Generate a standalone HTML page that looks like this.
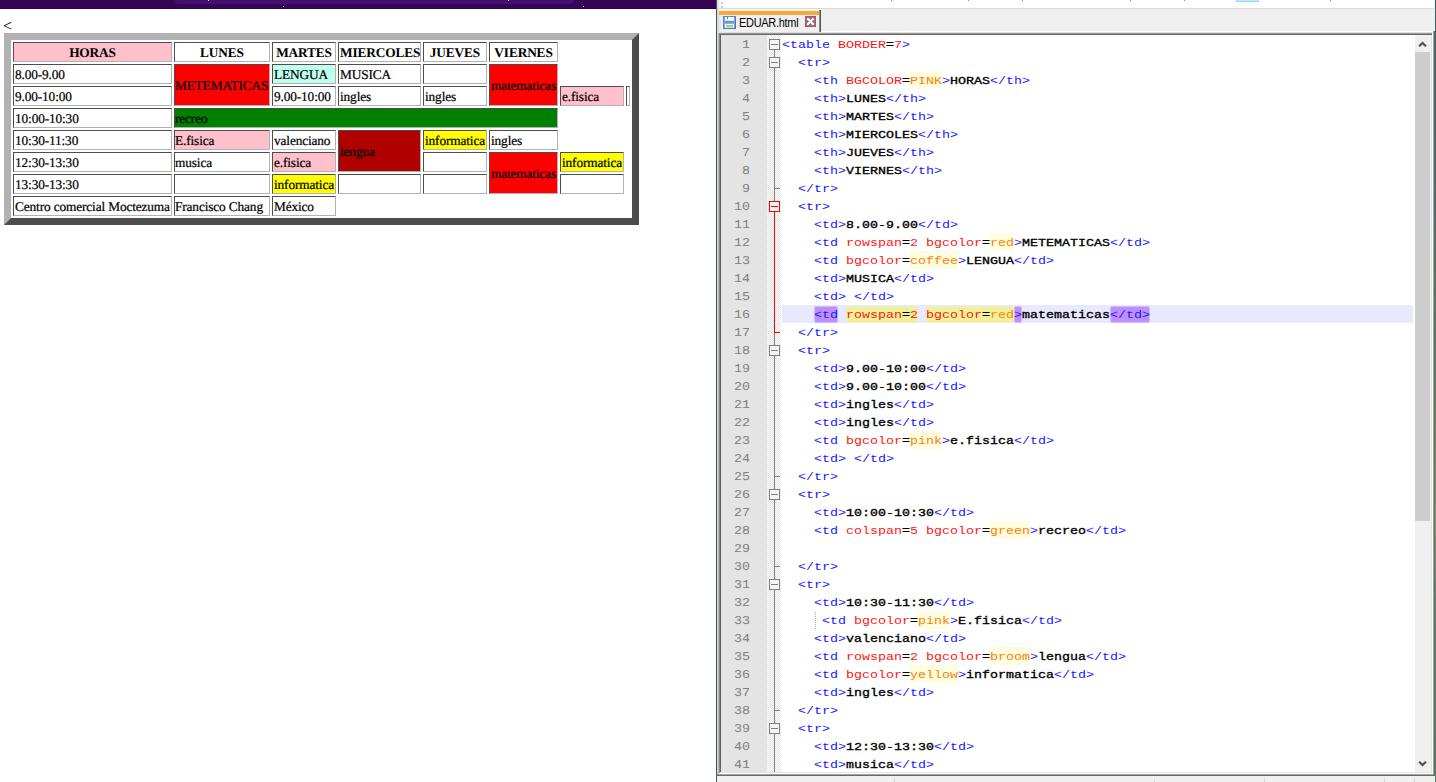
<!DOCTYPE html>
<html><head><meta charset="utf-8"><title>EDUAR</title>
<style>
html,body{margin:0;padding:0}
body{width:1436px;height:782px;overflow:hidden;background:#fff;position:relative;font-family:"Liberation Serif",serif}
div,span,svg{position:absolute;box-sizing:content-box}
/* browser pane */
#bar{left:0;top:0;width:716px;height:9px;background:linear-gradient(#380556 0,#380556 8px,#25004d 8px)}
#pill{left:175px;top:0;width:399px;height:4px;background:#450f76;border-radius:0 0 5px 5px}
.dot{width:1px;height:1px;background:#f3dfe3}
#lt{left:3px;top:18px;font-size:16px;line-height:18px;color:#000;text-rendering:geometricPrecision}
#tb{left:4px;top:33px;width:621px;height:178px;border:7px solid;border-color:#b2b2b2 #4d4d4d #4d4d4d #b2b2b2;background:#fff}
.c{border:1px solid;border-color:#4d4d4d #b2b2b2 #b2b2b2 #4d4d4d;font-size:13.3333px;letter-spacing:-0.135px;line-height:16px;color:#000;white-space:nowrap;overflow:visible;text-rendering:geometricPrecision}
.c span{left:1px;right:1px;height:16px;-webkit-text-stroke:0.22px #000}
.th span{text-align:center;font-weight:bold;-webkit-text-stroke:0}
/* notepad++ pane */
#npp{left:716px;top:0;width:720px;height:782px;background:#f0f0f0}
#nl{left:0;top:0;width:1px;height:782px;background:#3d5757}
#tbar{left:1px;top:0;width:717px;height:8px;background:linear-gradient(90deg,#dadada 0,#f4f4f4 3px,#fdfdfd 6px,#fff 12px)}
.grip{left:5px;width:2px;height:2px;background:#bcbcbc;border-radius:1px}
#tline{left:1px;top:8px;width:717px;height:1px;background:#dadada}
.tick{top:0;width:1px;height:1px;background:#8a8a8a}
#tabhl{left:3px;top:9px;width:102px;height:2px;background:linear-gradient(#fafafa 50%,#e9eff7 50%)}
#orange{left:3px;top:11px;width:100px;height:4px;background:#faa83a}
#tabr{left:103px;top:10px;width:2px;height:22px;background:linear-gradient(90deg,#8c8c8c 50%,#555 50%)}
#tabtxt{left:23px;top:15px;font-family:"Liberation Sans",sans-serif;font-size:11px;line-height:16px;letter-spacing:-0.3px;color:#000;white-space:nowrap;transform:scaleY(1.12);transform-origin:0 12px}
#edtop0{left:105px;top:31px;width:612px;height:1px;background:#fff}
#edtop1{left:3px;top:32px;width:714px;height:1px;background:#dedede}
#edtop2{left:3px;top:33px;width:714px;height:1px;background:#969696}
#edtop3{left:4px;top:34px;width:713px;height:1px;background:#696969}
#edl1{left:3px;top:33px;width:1px;height:740px;background:#8a8a8a}
#edl2{left:4px;top:34px;width:1px;height:738px;background:#606060}
#ed{left:5px;top:35px;width:710px;height:738px;background:#fff;overflow:hidden}
#edb0{left:5px;top:772px;width:710px;height:1px;background:#e3e3e3}
#edb1{left:3px;top:773px;width:713px;height:1px;background:#fff}
#edb2{left:1px;top:774px;width:718px;height:1px;background:#a0a0a0}
#edb3{left:1px;top:775px;width:718px;height:1px;background:#696969}
#edr0{left:715px;top:35px;width:1px;height:738px;background:#e3e3e3}
#edr1{left:716px;top:33px;width:1px;height:741px;background:#fff}
#edr2{left:717px;top:31px;width:1px;height:744px;background:#a0a0a0}
#desk{left:719px;top:0;width:1px;height:782px;background:linear-gradient(#2a6470 0%,#2b6b6a 20%,#5c8f55 50%,#7da05a 67%,#5a9070 77%,#3f8a68 100%)}
#lstrip1{left:1px;top:33px;width:1px;height:741px;background:#d4d4d4}
#lstrip2{left:2px;top:33px;width:1px;height:741px;background:#b8b8b8}
#desk2{left:718px;top:0;width:1px;height:782px;background:linear-gradient(#2a6470 0%,#2b6b6a 25%,#5c8f55 55%,#7da05a 70%,#3f8060 100%);opacity:0.45}
#edr3{left:718px;top:31px;width:1px;height:745px;background:#696969}
#mg{left:5px;top:35px;width:46px;height:738px;background:#e4e4e4}
#fm{left:51px;top:35px;width:14px;height:738px;background-color:#fff;
 background-image:linear-gradient(45deg,#e4e4e4 25%,transparent 25%,transparent 75%,#e4e4e4 75%),linear-gradient(45deg,#e4e4e4 25%,transparent 25%,transparent 75%,#e4e4e4 75%);
 background-size:2px 2px;background-position:0 0,1px 1px}
.foldsvg{left:51px;top:35px}
.ln{left:66px;width:633px;height:18px}
.num{left:5px;width:29px;height:18px}
.tx{left:0;top:1px;height:18px;font-family:"Liberation Mono",monospace;font-size:13.3333px;line-height:18px;white-space:pre;color:#000;transform:scaleY(0.88);transform-origin:0 12px}
.tx span{position:static}
.num .tx{left:auto;right:0;top:2px;color:#808080;text-rendering:geometricPrecision;transform:scaleY(0.90)}
.cur{left:66px;width:631px;height:18px;background:#e8e8ff}
.t{color:#1818ff}
.a{color:#ff1414}
.n{color:#ff1414}
.e{color:#000;-webkit-text-stroke:0.38px #000}
.x{color:#000;-webkit-text-stroke:0.38px #000}
.v{color:#ff8000}
.vbg{height:18px;background:#fefde0}
.hy{height:17px;background:#f1f19b;border:1px solid #ededcc;border-radius:2px;box-sizing:border-box}
.hp{height:17px;background:#bf8fff;border:1px solid #d3baff;border-radius:2px;box-sizing:border-box}
#guide{left:99px;top:612px;width:1px;height:17px;background-image:linear-gradient(#b0b0b0 50%,transparent 50%);background-size:1px 2px}
/* scrollbar */
#sb{left:699px;top:35px;width:17px;height:738px;background:#f0f0f0}
#thumb{left:699px;top:52px;width:15px;height:469px;background:#cdcdcd}
/* status */
.sdiv{top:778px;width:1px;height:4px;background:#d7d7d7}
</style></head>
<body>
<div id="bar"></div><div id="pill"></div>
<div class="dot" style="left:208px;top:0"></div><div class="dot" style="left:283px;top:6px"></div>
<div class="dot" style="left:508px;top:0"></div><div class="dot" style="left:583px;top:6px"></div>
<div id="lt">&lt;</div>
<div id="tb"></div>
<div class="c th" style="left:13px;top:42px;width:157px;height:18px;background:#ffc0cb;"><span style="top:2px">HORAS</span></div>
<div class="c th" style="left:174px;top:42px;width:94px;height:18px;"><span style="top:2px">LUNES</span></div>
<div class="c th" style="left:272px;top:42px;width:62px;height:18px;"><span style="top:2px">MARTES</span></div>
<div class="c th" style="left:338px;top:42px;width:81px;height:18px;"><span style="top:2px">MIERCOLES</span></div>
<div class="c th" style="left:423px;top:42px;width:62px;height:18px;"><span style="top:2px">JUEVES</span></div>
<div class="c th" style="left:489px;top:42px;width:67px;height:18px;"><span style="top:2px">VIERNES</span></div>
<div class="c" style="left:13px;top:64px;width:157px;height:18px;"><span style="top:2px">8.00-9.00</span></div>
<div class="c" style="left:174px;top:64px;width:94px;height:40px;background:#ff0000;"><span style="top:13px;left:0">METEMATICAS</span></div>
<div class="c" style="left:272px;top:64px;width:62px;height:18px;background:#c0ffee;"><span style="top:2px">LENGUA</span></div>
<div class="c" style="left:338px;top:64px;width:81px;height:18px;"><span style="top:2px">MUSICA</span></div>
<div class="c" style="left:423px;top:64px;width:62px;height:18px;"></div>
<div class="c" style="left:489px;top:64px;width:67px;height:40px;background:#ff0000;"><span style="top:13px">matematicas</span></div>
<div class="c" style="left:13px;top:86px;width:157px;height:18px;"><span style="top:2px">9.00-10:00</span></div>
<div class="c" style="left:272px;top:86px;width:62px;height:18px;"><span style="top:2px">9.00-10:00</span></div>
<div class="c" style="left:338px;top:86px;width:81px;height:18px;"><span style="top:2px">ingles</span></div>
<div class="c" style="left:423px;top:86px;width:62px;height:18px;"><span style="top:2px">ingles</span></div>
<div class="c" style="left:560px;top:86px;width:62px;height:18px;background:#ffc0cb;"><span style="top:2px">e.fisica</span></div>
<div class="c" style="left:626px;top:86px;width:2px;height:18px;"></div>
<div class="c" style="left:13px;top:108px;width:157px;height:18px;"><span style="top:2px">10:00-10:30</span></div>
<div class="c" style="left:174px;top:108px;width:382px;height:18px;background:#008000;"><span style="top:2px;left:0">recreo</span></div>
<div class="c" style="left:13px;top:130px;width:157px;height:18px;"><span style="top:2px">10:30-11:30</span></div>
<div class="c" style="left:174px;top:130px;width:94px;height:18px;background:#ffc0cb;"><span style="top:2px;left:0">E.fisica</span></div>
<div class="c" style="left:272px;top:130px;width:62px;height:18px;"><span style="top:2px">valenciano</span></div>
<div class="c" style="left:338px;top:130px;width:81px;height:40px;background:#b00000;"><span style="top:13px">lengua</span></div>
<div class="c" style="left:423px;top:130px;width:62px;height:18px;background:#ffff00;"><span style="top:2px">informatica</span></div>
<div class="c" style="left:489px;top:130px;width:67px;height:18px;"><span style="top:2px">ingles</span></div>
<div class="c" style="left:13px;top:152px;width:157px;height:18px;"><span style="top:2px">12:30-13:30</span></div>
<div class="c" style="left:174px;top:152px;width:94px;height:18px;"><span style="top:2px;left:0">musica</span></div>
<div class="c" style="left:272px;top:152px;width:62px;height:18px;background:#ffc0cb;"><span style="top:2px">e.fisica</span></div>
<div class="c" style="left:423px;top:152px;width:62px;height:18px;"></div>
<div class="c" style="left:489px;top:152px;width:67px;height:40px;background:#ff0000;"><span style="top:13px">matematicas</span></div>
<div class="c" style="left:560px;top:152px;width:62px;height:18px;background:#ffff00;"><span style="top:2px">informatica</span></div>
<div class="c" style="left:13px;top:174px;width:157px;height:18px;"><span style="top:2px">13:30-13:30</span></div>
<div class="c" style="left:174px;top:174px;width:94px;height:18px;"></div>
<div class="c" style="left:272px;top:174px;width:62px;height:18px;background:#ffff00;"><span style="top:2px">informatica</span></div>
<div class="c" style="left:338px;top:174px;width:81px;height:18px;"></div>
<div class="c" style="left:423px;top:174px;width:62px;height:18px;"></div>
<div class="c" style="left:560px;top:174px;width:62px;height:18px;"></div>
<div class="c" style="left:13px;top:196px;width:157px;height:18px;"><span style="top:2px">Centro comercial Moctezuma</span></div>
<div class="c" style="left:174px;top:196px;width:94px;height:18px;"><span style="top:2px;left:0">Francisco Chang</span></div>
<div class="c" style="left:272px;top:196px;width:62px;height:18px;"><span style="top:2px">México</span></div>
<div id="npp">
<div id="tbar"></div><div class="grip" style="top:2px"></div><div class="grip" style="top:6px"></div><div id="tline"></div><div class="tick" style="left:175px"></div><div class="tick" style="left:252px"></div><div class="tick" style="left:306px"></div><div class="tick" style="left:414px"></div><div class="tick" style="left:468px"></div><div class="tick" style="left:614px"></div>
<div style="left:520px;top:0;width:21px;height:1px;background:#cce8ff;border:1px solid #99d1ff;border-top:0"></div>
<div style="left:1px;top:9px;width:5px;height:24px;background:linear-gradient(90deg,#d9d9d9,#f0f0f0)"></div><div id="tabhl"></div><div id="orange"></div><div id="tabr"></div>
<svg style="left:7px;top:16px" width="13" height="13" viewBox="0 0 13 13" shape-rendering="crispEdges">
<rect x="0" y="0" width="13" height="13" fill="#5d8ad0"/>
<rect x="1" y="1" width="11" height="11" fill="#7ca5e4"/>
<rect x="12" y="1" width="1" height="12" fill="#4a78bf"/>
<rect x="0" y="12" width="13" height="1" fill="#4a78bf"/>
<rect x="2" y="1" width="9" height="3" fill="#fff"/>
<rect x="2" y="4" width="9" height="1" fill="#d9e6f8"/>
<rect x="4" y="1" width="1" height="2" fill="#5b82c8"/>
<rect x="4" y="3" width="1" height="1" fill="#b7cdee"/>
<rect x="2" y="5" width="9" height="1" fill="#628ed6"/>
<rect x="2" y="6" width="9" height="1" fill="#6f9ce2"/>
<rect x="2" y="7" width="9" height="1" fill="#86afee"/>
<rect x="2" y="8" width="9" height="4" fill="#f4f8fd"/>
<rect x="3" y="9" width="7" height="1" fill="#9bcf7e"/>
<rect x="3" y="10" width="7" height="1" fill="#afd996"/>
<rect x="3" y="11" width="7" height="1" fill="#c6e5b3"/>
</svg>
<div id="tabtxt">EDUAR.html</div>
<svg style="left:89px;top:16px" width="11" height="11" viewBox="0 0 11 11" shape-rendering="crispEdges">
<rect x="0" y="0" width="11" height="11" fill="#a4586f"/>
<rect x="1" y="1" width="9" height="9" fill="#b06a82"/>
<g fill="#fff">
<rect x="2" y="2" width="2" height="1"/><rect x="7" y="2" width="2" height="1"/>
<rect x="2" y="3" width="3" height="1"/><rect x="6" y="3" width="3" height="1"/>
<rect x="3" y="4" width="5" height="1"/>
<rect x="4" y="5" width="3" height="1"/>
<rect x="3" y="6" width="5" height="1"/>
<rect x="2" y="7" width="3" height="1"/><rect x="6" y="7" width="3" height="1"/>
<rect x="2" y="8" width="2" height="1"/><rect x="7" y="8" width="2" height="1"/>
</g>
</svg>
<div id="edtop0"></div><div id="edtop1"></div><div id="edtop2"></div><div id="edtop3"></div>
<div id="lstrip1"></div><div id="lstrip2"></div><div id="edl1"></div><div id="edl2"></div>
<div id="ed"></div>
<div id="mg"></div><div id="fm"></div>
<svg class="foldsvg" width="14" height="738" viewBox="0 0 14 738" shape-rendering="crispEdges"><rect x="2.5" y="4.5" width="10" height="10" fill="#f4f4f4" stroke="#808080" stroke-width="1"/><rect x="4" y="9" width="7" height="1" fill="#808080"/><rect x="7" y="15" width="1" height="3" fill="#808080"/><rect x="7" y="18" width="1" height="4" fill="#808080"/><rect x="2.5" y="22.5" width="10" height="10" fill="#f4f4f4" stroke="#808080" stroke-width="1"/><rect x="4" y="27" width="7" height="1" fill="#808080"/><rect x="7" y="33" width="1" height="3" fill="#808080"/><rect x="7" y="36" width="1" height="18" fill="#808080"/><rect x="7" y="54" width="1" height="18" fill="#808080"/><rect x="7" y="72" width="1" height="18" fill="#808080"/><rect x="7" y="90" width="1" height="18" fill="#808080"/><rect x="7" y="108" width="1" height="18" fill="#808080"/><rect x="7" y="126" width="1" height="18" fill="#808080"/><rect x="7" y="144" width="1" height="10" fill="#808080"/><rect x="7" y="154" width="1" height="8" fill="#808080"/><rect x="8" y="153" width="5" height="1" fill="#808080"/><rect x="7" y="162" width="1" height="4" fill="#808080"/><rect x="2.5" y="166.5" width="10" height="10" fill="#f4f4f4" stroke="#ff0000" stroke-width="1"/><rect x="4" y="171" width="7" height="1" fill="#ff0000"/><rect x="7" y="177" width="1" height="3" fill="#ff0000"/><rect x="7" y="180" width="1" height="18" fill="#ff0000"/><rect x="7" y="198" width="1" height="18" fill="#ff0000"/><rect x="7" y="216" width="1" height="18" fill="#ff0000"/><rect x="7" y="234" width="1" height="18" fill="#ff0000"/><rect x="7" y="252" width="1" height="18" fill="#ff0000"/><rect x="7" y="270" width="1" height="18" fill="#ff0000"/><rect x="7" y="288" width="1" height="10" fill="#ff0000"/><rect x="7" y="298" width="1" height="8" fill="#808080"/><rect x="8" y="297" width="5" height="1" fill="#ff0000"/><rect x="7" y="306" width="1" height="4" fill="#808080"/><rect x="2.5" y="310.5" width="10" height="10" fill="#f4f4f4" stroke="#808080" stroke-width="1"/><rect x="4" y="315" width="7" height="1" fill="#808080"/><rect x="7" y="321" width="1" height="3" fill="#808080"/><rect x="7" y="324" width="1" height="18" fill="#808080"/><rect x="7" y="342" width="1" height="18" fill="#808080"/><rect x="7" y="360" width="1" height="18" fill="#808080"/><rect x="7" y="378" width="1" height="18" fill="#808080"/><rect x="7" y="396" width="1" height="18" fill="#808080"/><rect x="7" y="414" width="1" height="18" fill="#808080"/><rect x="7" y="432" width="1" height="10" fill="#808080"/><rect x="7" y="442" width="1" height="8" fill="#808080"/><rect x="8" y="441" width="5" height="1" fill="#808080"/><rect x="7" y="450" width="1" height="4" fill="#808080"/><rect x="2.5" y="454.5" width="10" height="10" fill="#f4f4f4" stroke="#808080" stroke-width="1"/><rect x="4" y="459" width="7" height="1" fill="#808080"/><rect x="7" y="465" width="1" height="3" fill="#808080"/><rect x="7" y="468" width="1" height="18" fill="#808080"/><rect x="7" y="486" width="1" height="18" fill="#808080"/><rect x="7" y="504" width="1" height="18" fill="#808080"/><rect x="7" y="522" width="1" height="10" fill="#808080"/><rect x="7" y="532" width="1" height="8" fill="#808080"/><rect x="8" y="531" width="5" height="1" fill="#808080"/><rect x="7" y="540" width="1" height="4" fill="#808080"/><rect x="2.5" y="544.5" width="10" height="10" fill="#f4f4f4" stroke="#808080" stroke-width="1"/><rect x="4" y="549" width="7" height="1" fill="#808080"/><rect x="7" y="555" width="1" height="3" fill="#808080"/><rect x="7" y="558" width="1" height="18" fill="#808080"/><rect x="7" y="576" width="1" height="18" fill="#808080"/><rect x="7" y="594" width="1" height="18" fill="#808080"/><rect x="7" y="612" width="1" height="18" fill="#808080"/><rect x="7" y="630" width="1" height="18" fill="#808080"/><rect x="7" y="648" width="1" height="18" fill="#808080"/><rect x="7" y="666" width="1" height="10" fill="#808080"/><rect x="7" y="676" width="1" height="8" fill="#808080"/><rect x="8" y="675" width="5" height="1" fill="#808080"/><rect x="7" y="684" width="1" height="4" fill="#808080"/><rect x="2.5" y="688.5" width="10" height="10" fill="#f4f4f4" stroke="#808080" stroke-width="1"/><rect x="4" y="693" width="7" height="1" fill="#808080"/><rect x="7" y="699" width="1" height="3" fill="#808080"/><rect x="7" y="702" width="1" height="18" fill="#808080"/><rect x="7" y="720" width="1" height="18" fill="#808080"/></svg>
<div class="cur" style="top:305px"></div>
<div class="vbg" style="left:194px;top:71px;width:32px"></div>
<div class="vbg" style="left:274px;top:233px;width:24px"></div>
<div class="vbg" style="left:194px;top:251px;width:48px"></div>
<div class="hp" style="left:98px;top:306px;width:24px"></div>
<div class="hy" style="left:130px;top:306px;width:72px"></div>
<div class="hy" style="left:210px;top:306px;width:88px"></div>
<div class="hp" style="left:298px;top:306px;width:8px"></div>
<div class="hp" style="left:394px;top:306px;width:40px"></div>
<div class="vbg" style="left:194px;top:431px;width:32px"></div>
<div class="vbg" style="left:274px;top:521px;width:40px"></div>
<div class="vbg" style="left:202px;top:611px;width:32px"></div>
<div class="vbg" style="left:274px;top:647px;width:40px"></div>
<div class="vbg" style="left:194px;top:665px;width:48px"></div>
<div class="ln" style="top:35px"><span class="tx"><span class="t">&lt;table</span> <span class="a">BORDER</span><span class="e">=</span><span class="n">7</span><span class="t">&gt;</span></span></div>
<div class="num" style="top:35px"><span class="tx">1</span></div>
<div class="ln" style="top:53px"><span class="tx">  <span class="t">&lt;tr&gt;</span></span></div>
<div class="num" style="top:53px"><span class="tx">2</span></div>
<div class="ln" style="top:71px"><span class="tx">    <span class="t">&lt;th</span> <span class="a">BGCOLOR</span><span class="e">=</span><span class="v">PINK</span><span class="t">&gt;</span><span class="x">HORAS</span><span class="t">&lt;/th&gt;</span></span></div>
<div class="num" style="top:71px"><span class="tx">3</span></div>
<div class="ln" style="top:89px"><span class="tx">    <span class="t">&lt;th&gt;</span><span class="x">LUNES</span><span class="t">&lt;/th&gt;</span></span></div>
<div class="num" style="top:89px"><span class="tx">4</span></div>
<div class="ln" style="top:107px"><span class="tx">    <span class="t">&lt;th&gt;</span><span class="x">MARTES</span><span class="t">&lt;/th&gt;</span></span></div>
<div class="num" style="top:107px"><span class="tx">5</span></div>
<div class="ln" style="top:125px"><span class="tx">    <span class="t">&lt;th&gt;</span><span class="x">MIERCOLES</span><span class="t">&lt;/th&gt;</span></span></div>
<div class="num" style="top:125px"><span class="tx">6</span></div>
<div class="ln" style="top:143px"><span class="tx">    <span class="t">&lt;th&gt;</span><span class="x">JUEVES</span><span class="t">&lt;/th&gt;</span></span></div>
<div class="num" style="top:143px"><span class="tx">7</span></div>
<div class="ln" style="top:161px"><span class="tx">    <span class="t">&lt;th&gt;</span><span class="x">VIERNES</span><span class="t">&lt;/th&gt;</span></span></div>
<div class="num" style="top:161px"><span class="tx">8</span></div>
<div class="ln" style="top:179px"><span class="tx">  <span class="t">&lt;/tr&gt;</span></span></div>
<div class="num" style="top:179px"><span class="tx">9</span></div>
<div class="ln" style="top:197px"><span class="tx">  <span class="t">&lt;tr&gt;</span></span></div>
<div class="num" style="top:197px"><span class="tx">10</span></div>
<div class="ln" style="top:215px"><span class="tx">    <span class="t">&lt;td&gt;</span><span class="x">8.00-9.00</span><span class="t">&lt;/td&gt;</span></span></div>
<div class="num" style="top:215px"><span class="tx">11</span></div>
<div class="ln" style="top:233px"><span class="tx">    <span class="t">&lt;td</span> <span class="a">rowspan</span><span class="e">=</span><span class="n">2</span> <span class="a">bgcolor</span><span class="e">=</span><span class="v">red</span><span class="t">&gt;</span><span class="x">METEMATICAS</span><span class="t">&lt;/td&gt;</span></span></div>
<div class="num" style="top:233px"><span class="tx">12</span></div>
<div class="ln" style="top:251px"><span class="tx">    <span class="t">&lt;td</span> <span class="a">bgcolor</span><span class="e">=</span><span class="v">coffee</span><span class="t">&gt;</span><span class="x">LENGUA</span><span class="t">&lt;/td&gt;</span></span></div>
<div class="num" style="top:251px"><span class="tx">13</span></div>
<div class="ln" style="top:269px"><span class="tx">    <span class="t">&lt;td&gt;</span><span class="x">MUSICA</span><span class="t">&lt;/td&gt;</span></span></div>
<div class="num" style="top:269px"><span class="tx">14</span></div>
<div class="ln" style="top:287px"><span class="tx">    <span class="t">&lt;td&gt;</span> <span class="t">&lt;/td&gt;</span></span></div>
<div class="num" style="top:287px"><span class="tx">15</span></div>
<div class="ln" style="top:305px"><span class="tx">    <span class="t">&lt;td</span> <span class="a">rowspan</span><span class="e">=</span><span class="n">2</span> <span class="a">bgcolor</span><span class="e">=</span><span class="v">red</span><span class="t">&gt;</span><span class="x">matematicas</span><span class="t">&lt;/td&gt;</span></span></div>
<div class="num" style="top:305px"><span class="tx">16</span></div>
<div class="ln" style="top:323px"><span class="tx">  <span class="t">&lt;/tr&gt;</span></span></div>
<div class="num" style="top:323px"><span class="tx">17</span></div>
<div class="ln" style="top:341px"><span class="tx">  <span class="t">&lt;tr&gt;</span></span></div>
<div class="num" style="top:341px"><span class="tx">18</span></div>
<div class="ln" style="top:359px"><span class="tx">    <span class="t">&lt;td&gt;</span><span class="x">9.00-10:00</span><span class="t">&lt;/td&gt;</span></span></div>
<div class="num" style="top:359px"><span class="tx">19</span></div>
<div class="ln" style="top:377px"><span class="tx">    <span class="t">&lt;td&gt;</span><span class="x">9.00-10:00</span><span class="t">&lt;/td&gt;</span></span></div>
<div class="num" style="top:377px"><span class="tx">20</span></div>
<div class="ln" style="top:395px"><span class="tx">    <span class="t">&lt;td&gt;</span><span class="x">ingles</span><span class="t">&lt;/td&gt;</span></span></div>
<div class="num" style="top:395px"><span class="tx">21</span></div>
<div class="ln" style="top:413px"><span class="tx">    <span class="t">&lt;td&gt;</span><span class="x">ingles</span><span class="t">&lt;/td&gt;</span></span></div>
<div class="num" style="top:413px"><span class="tx">22</span></div>
<div class="ln" style="top:431px"><span class="tx">    <span class="t">&lt;td</span> <span class="a">bgcolor</span><span class="e">=</span><span class="v">pink</span><span class="t">&gt;</span><span class="x">e.fisica</span><span class="t">&lt;/td&gt;</span></span></div>
<div class="num" style="top:431px"><span class="tx">23</span></div>
<div class="ln" style="top:449px"><span class="tx">    <span class="t">&lt;td&gt;</span> <span class="t">&lt;/td&gt;</span></span></div>
<div class="num" style="top:449px"><span class="tx">24</span></div>
<div class="ln" style="top:467px"><span class="tx">  <span class="t">&lt;/tr&gt;</span></span></div>
<div class="num" style="top:467px"><span class="tx">25</span></div>
<div class="ln" style="top:485px"><span class="tx">  <span class="t">&lt;tr&gt;</span></span></div>
<div class="num" style="top:485px"><span class="tx">26</span></div>
<div class="ln" style="top:503px"><span class="tx">    <span class="t">&lt;td&gt;</span><span class="x">10:00-10:30</span><span class="t">&lt;/td&gt;</span></span></div>
<div class="num" style="top:503px"><span class="tx">27</span></div>
<div class="ln" style="top:521px"><span class="tx">    <span class="t">&lt;td</span> <span class="a">colspan</span><span class="e">=</span><span class="n">5</span> <span class="a">bgcolor</span><span class="e">=</span><span class="v">green</span><span class="t">&gt;</span><span class="x">recreo</span><span class="t">&lt;/td&gt;</span></span></div>
<div class="num" style="top:521px"><span class="tx">28</span></div>
<div class="ln" style="top:539px"><span class="tx"></span></div>
<div class="num" style="top:539px"><span class="tx">29</span></div>
<div class="ln" style="top:557px"><span class="tx">  <span class="t">&lt;/tr&gt;</span></span></div>
<div class="num" style="top:557px"><span class="tx">30</span></div>
<div class="ln" style="top:575px"><span class="tx">  <span class="t">&lt;tr&gt;</span></span></div>
<div class="num" style="top:575px"><span class="tx">31</span></div>
<div class="ln" style="top:593px"><span class="tx">    <span class="t">&lt;td&gt;</span><span class="x">10:30-11:30</span><span class="t">&lt;/td&gt;</span></span></div>
<div class="num" style="top:593px"><span class="tx">32</span></div>
<div class="ln" style="top:611px"><span class="tx">     <span class="t">&lt;td</span> <span class="a">bgcolor</span><span class="e">=</span><span class="v">pink</span><span class="t">&gt;</span><span class="x">E.fisica</span><span class="t">&lt;/td&gt;</span></span></div>
<div class="num" style="top:611px"><span class="tx">33</span></div>
<div class="ln" style="top:629px"><span class="tx">    <span class="t">&lt;td&gt;</span><span class="x">valenciano</span><span class="t">&lt;/td&gt;</span></span></div>
<div class="num" style="top:629px"><span class="tx">34</span></div>
<div class="ln" style="top:647px"><span class="tx">    <span class="t">&lt;td</span> <span class="a">rowspan</span><span class="e">=</span><span class="n">2</span> <span class="a">bgcolor</span><span class="e">=</span><span class="v">broom</span><span class="t">&gt;</span><span class="x">lengua</span><span class="t">&lt;/td&gt;</span></span></div>
<div class="num" style="top:647px"><span class="tx">35</span></div>
<div class="ln" style="top:665px"><span class="tx">    <span class="t">&lt;td</span> <span class="a">bgcolor</span><span class="e">=</span><span class="v">yellow</span><span class="t">&gt;</span><span class="x">informatica</span><span class="t">&lt;/td&gt;</span></span></div>
<div class="num" style="top:665px"><span class="tx">36</span></div>
<div class="ln" style="top:683px"><span class="tx">    <span class="t">&lt;td&gt;</span><span class="x">ingles</span><span class="t">&lt;/td&gt;</span></span></div>
<div class="num" style="top:683px"><span class="tx">37</span></div>
<div class="ln" style="top:701px"><span class="tx">  <span class="t">&lt;/tr&gt;</span></span></div>
<div class="num" style="top:701px"><span class="tx">38</span></div>
<div class="ln" style="top:719px"><span class="tx">  <span class="t">&lt;tr&gt;</span></span></div>
<div class="num" style="top:719px"><span class="tx">39</span></div>
<div class="ln" style="top:737px"><span class="tx">    <span class="t">&lt;td&gt;</span><span class="x">12:30-13:30</span><span class="t">&lt;/td&gt;</span></span></div>
<div class="num" style="top:737px"><span class="tx">40</span></div>
<div class="ln" style="top:755px"><span class="tx">    <span class="t">&lt;td&gt;</span><span class="x">musica</span><span class="t">&lt;/td&gt;</span></span></div>
<div class="num" style="top:755px"><span class="tx">41</span></div>
<div id="guide"></div>
<div id="sb"></div><div id="thumb"></div>
<svg style="left:702px;top:41px" width="9" height="6" viewBox="0 0 9 6"><path d="M1.1 5.3 L4.5 1.9 L7.9 5.3" fill="none" stroke="#505050" stroke-width="2.1"/></svg>
<svg style="left:702px;top:761px" width="9" height="6" viewBox="0 0 9 6"><path d="M1.1 0.7 L4.5 4.1 L7.9 0.7" fill="none" stroke="#505050" stroke-width="2.1"/></svg>
<div id="edb0"></div><div id="edb1"></div><div id="edb2"></div><div id="edb3"></div>
<div id="edr0"></div><div id="edr1"></div><div id="edr2"></div>
<div id="edr3"></div><div id="desk"></div>
<div class="sdiv" style="left:178px"></div><div class="sdiv" style="left:438px"></div><div class="sdiv" style="left:548px"></div><div class="sdiv" style="left:668px"></div><div class="sdiv" style="left:698px"></div>
<div id="nl"></div>
</div>
</body></html>
